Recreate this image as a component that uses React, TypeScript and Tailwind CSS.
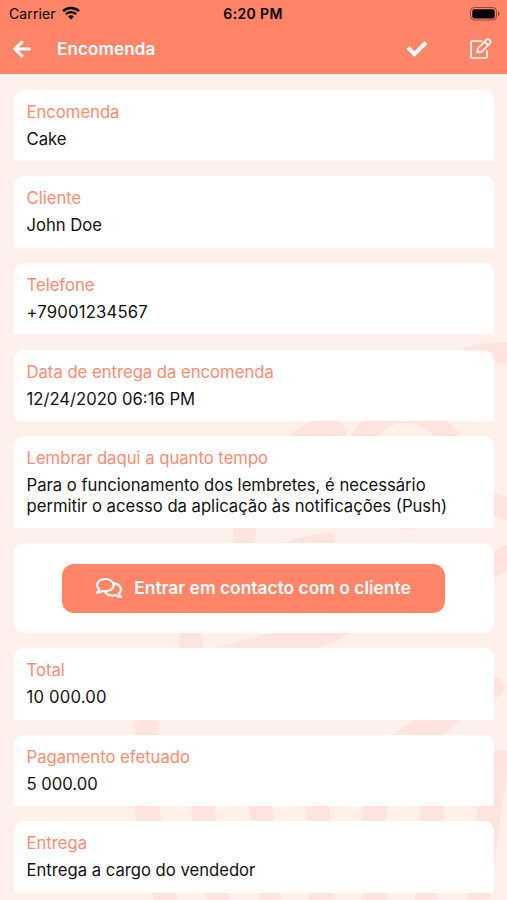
import React from "react";
import clsx from "clsx";
import { FaArrowLeft, FaCheck, FaRegComments } from "react-icons/fa";

interface FieldCardProps {
  label: string;
  value: string;
  tall?: boolean;
  numeric?: boolean;
}

function StatusBar() {
  return (
    <div className="flex h-[27px] items-center justify-between pl-[9px] pr-[8px] text-black">
      <div className="flex w-[150px] items-center gap-[6px]">
        <span className="text-[14px] tracking-[0.1px]">Carrier</span>
        <svg width="18" height="14" viewBox="0 0 18 14" fill="none" className="-mt-px">
          <path d="M1 5.2a11.6 11.6 0 0 1 16 0" stroke="currentColor" strokeWidth="2.5" />
          <path d="M3.9 8.2a7.4 7.4 0 0 1 10.2 0" stroke="currentColor" strokeWidth="2.4" />
          <path d="M9 13.6 6.1 10.6a4.2 4.2 0 0 1 5.8 0z" fill="currentColor" />
        </svg>
      </div>
      <span className="-ml-[2px] text-[14px] font-semibold tracking-[0.35px]">6:20 PM</span>
      <div className="flex w-[150px] justify-end">
        <svg width="30" height="14" viewBox="0 0 30 14" className="-mr-px">
          <rect x="0.5" y="0.5" width="26" height="12.5" rx="3.8" fill="none" stroke="#000" strokeOpacity="0.45" />
          <rect x="2.3" y="2.2" width="22.4" height="9.2" rx="2.2" fill="#000" />
          <path d="M28 4.6v4.4c1-.4 1.6-1.2 1.6-2.2S29 5 28 4.6z" fill="#000" fillOpacity="0.5" />
        </svg>
      </div>
    </div>
  );
}

function Header() {
  return (
    <header className="h-[74px] shrink-0 bg-[#ff8468]">
      <StatusBar />
      <div className="flex h-[44px] items-center pl-3 pr-[14px] text-white">
        <FaArrowLeft className="size-5" />
        <h1 className="ml-[25px] flex-1 pt-[2px] text-[17px] font-semibold tracking-[0.15px]">Encomenda</h1>
        <FaCheck className="mr-[42px] size-5" />
        <svg width="24" height="22" viewBox="0 0 24 22" fill="none" stroke="currentColor" strokeWidth="1.7" strokeLinejoin="round">
          <path d="M12.5 3H3.2C2.4 3 2 3.4 2 4.2v14.6c0 .8.4 1.2 1.2 1.2h13.6c.8 0 1.2-.4 1.2-1.2v-5.6" strokeLinecap="round" />
          <path d="m8.2 14.5.7-4.2 8.4-8.4c1-1 2.2-1 3.2 0l.4.4c1 1 1 2.2 0 3.2l-8.4 8.4z" />
          <path d="m15.8 3.8 3.4 3.4" />
        </svg>
      </div>
    </header>
  );
}

// Cupcake drawn behind the cards
function Backdrop() {
  return (
    <svg className="absolute inset-0" width="507" height="900" viewBox="0 0 507 900" fill="#ffe3de">
      <path d="M440 363Q458 342 507 342V363Q480 360 465 370Z" />
      <path d="M285 442Q300 420 325 420H337Q345 424 347 436L343 442Z" />
      <path d="M346 442Q357 424 370 415H435Q455 422 464 442H438Q426 423 405 423Q384 423 374 442Z" />
      <path d="M480 490Q498 494 507 497V520Q500 516 480 513Z" />
      <path d="M234 520H250L257 531L253 548H232Z" />
      <path d="M270 549Q300 534 334 533L337 549Z" />
      <path d="M388 525H426Q405 534 388 525Z" />
      <path d="M507 545Q498 547 490 556V580Q500 576 507 570Z" />
      <path d="M180 625H202V655H180Z" />
      <path d="M218 647Q245 640 272 633H350Q335 645 305 650Z" />
      <circle cx="494" cy="687.5" r="10.5" />
      <path d="M394 735L418 717H464L440 738Z" />
      <path d="M134 710H157L159 740H135Z" />
      <path d="M480 750H507V772L502 806L495 860L490 900H467L478 806Z" />
      <path d="M130 790H155L162 821L177 900H154L137 821Z" />
      <path d="M188 790H211L217 821L229 900H207L193 821Z" />
      <path d="M247 790H270L274 821L281 900H259L251 821Z" />
      <path d="M305 790H329L330 821L334 900H310L307 821Z" />
      <path d="M363 790H388L386 821L386 900H362L362 821Z" />
      <path d="M422 790H446L443 821L437 900H415L420 821Z" />
    </svg>
  );
}

function FieldCard({ label, value, tall, numeric }: FieldCardProps) {
  return (
    <div
      className={clsx(
        "shrink-0 rounded-t-[10px] bg-white px-[13px] pt-[12px]",
        tall ? "h-[92px]" : "h-[71.5px]"
      )}
    >
      <p className="text-[16.65px] leading-[21px] text-[#ff8a70]">{label}</p>
      <p
        className={clsx(
          "mt-[6px] whitespace-pre-line text-[16.65px] leading-[21px] text-[#111]",
          numeric && "tracking-[0.2px]"
        )}
      >
        {value}
      </p>
    </div>
  );
}

function App() {
  return (
    <div className="relative flex h-[900px] w-[507px] flex-col overflow-hidden bg-[#fff0ec] font-['Inter',sans-serif]">
      <Backdrop />
      <div className="relative flex flex-col">
        <Header />
        <main className="flex flex-col gap-[15.1px] px-[13.5px] pt-[15.8px]">
          <FieldCard label="Encomenda" value="Cake" />
          <FieldCard label="Cliente" value="John Doe" />
          <FieldCard label="Telefone" value="+79001234567" numeric />
          <FieldCard label="Data de entrega da encomenda" value="12/24/2020 06:16 PM" />
          <FieldCard
            tall
            label="Lembrar daqui a quanto tempo"
            value={
              "Para o funcionamento dos lembretes, é necessário\npermitir o acesso da aplicação às notificações (Push)"
            }
          />
          <div className="flex h-[89.7px] shrink-0 items-center justify-center rounded-[10px] bg-white">
            <button className="flex h-[49px] w-[383px] items-center justify-center gap-3 rounded-[12px] bg-[#ff8468] text-[17.4px] font-semibold text-white">
              <FaRegComments className="size-[26px]" />
              Entrar em contacto com o cliente
            </button>
          </div>
          <FieldCard label="Total" value="10 000.00" numeric />
          <FieldCard label="Pagamento efetuado" value="5 000.00" />
          <FieldCard label="Entrega" value="Entrega a cargo do vendedor" />
        </main>
      </div>
    </div>
  );
}

export default App;
